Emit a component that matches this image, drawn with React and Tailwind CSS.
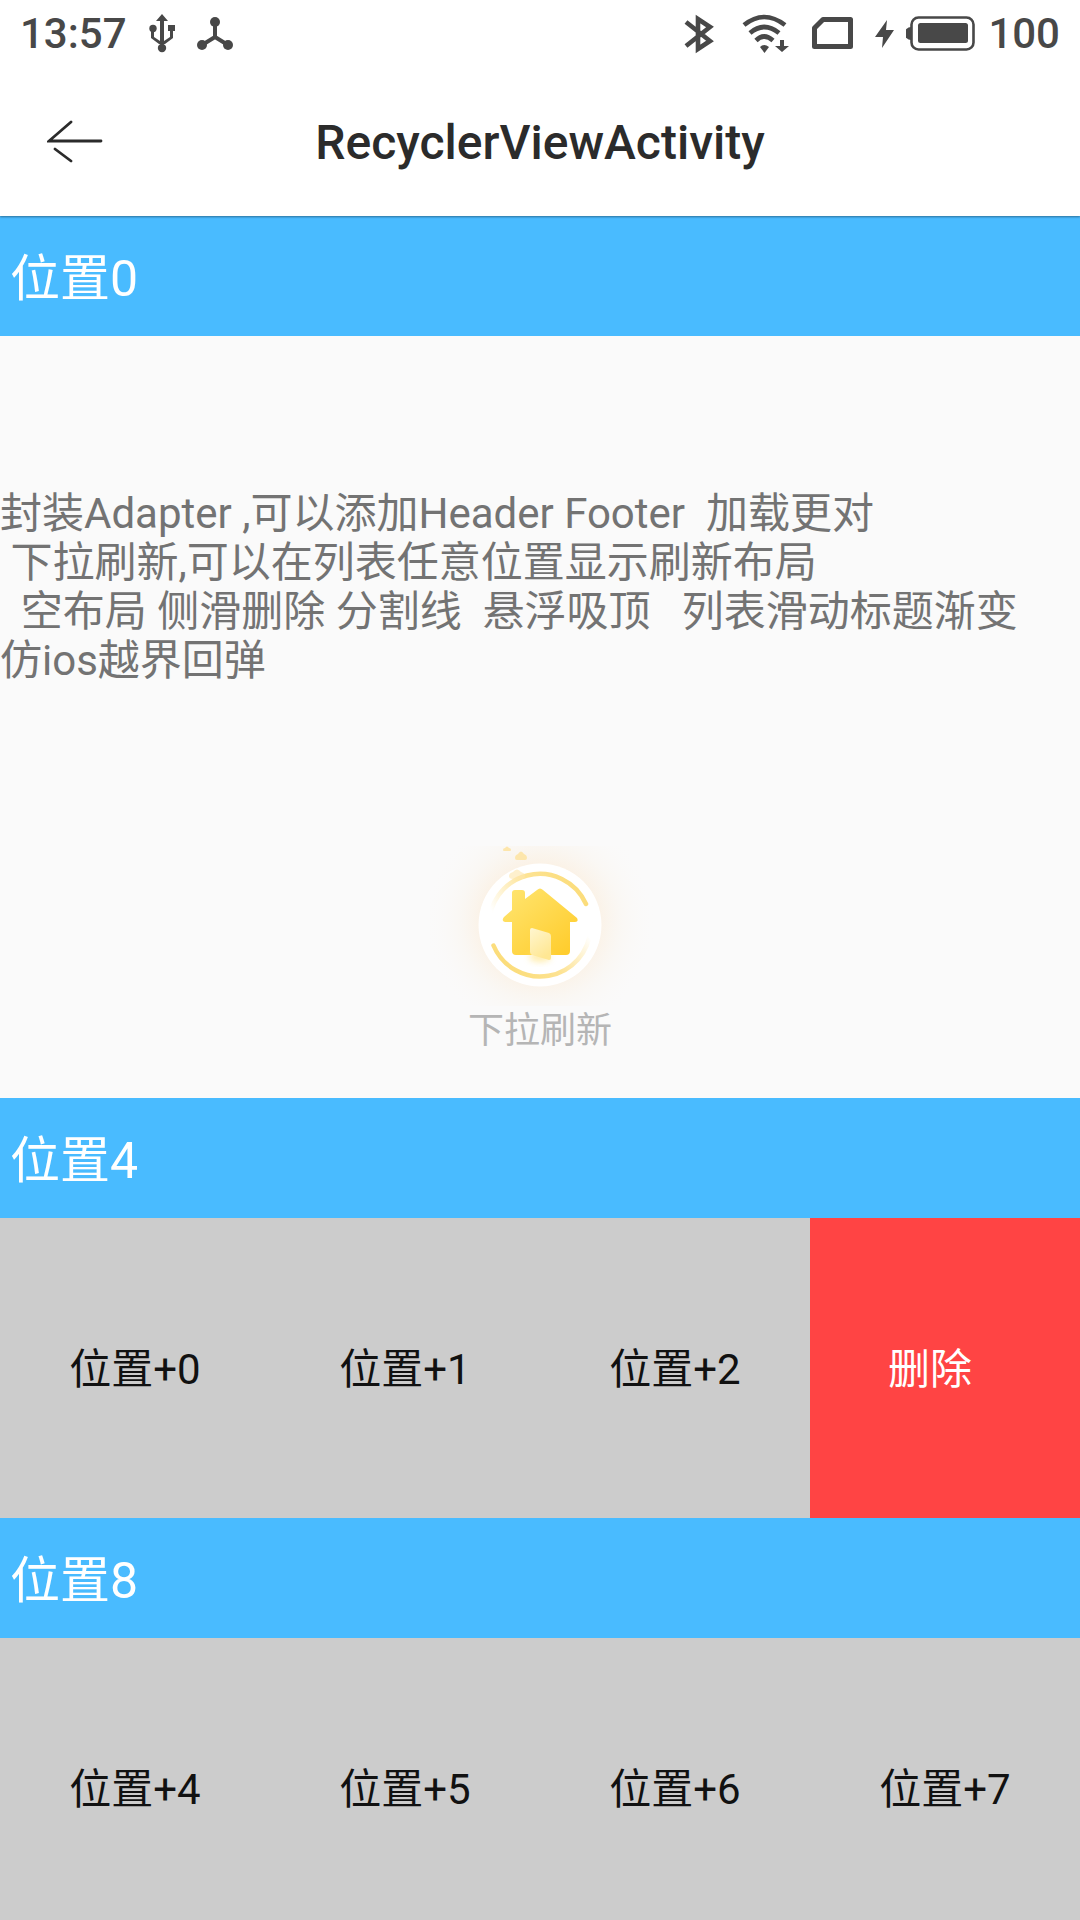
import React from "react";

const INK = "#484848";

function UsbIcon() {
  return (
    <svg width="26" height="40" viewBox="0 0 26 40" fill={INK} aria-hidden="true">
      <path d="M13 0l6 7h-4v20l6-4v-6h-2V11h7v6h-2v7l-8 6h-6l-8-6v-7h3v6l6 4V7H7z" />
      <circle cx="4" cy="14.500" r="3.700" />
      <circle cx="13" cy="34" r="4.200" />
    </svg>
  );
}

function TriNodeIcon() {
  return (
    <svg width="36" height="34" viewBox="0 0 36 34" fill={INK} aria-hidden="true">
      <path d="M18 5v15M18 20L5 28M18 20l13 8" stroke={INK} strokeWidth="4" fill="none" />
      <circle cx="18" cy="5" r="5" />
      <circle cx="5" cy="28" r="5" />
      <circle cx="31" cy="28" r="5" />
    </svg>
  );
}

function BluetoothIcon() {
  return (
    <svg width="30" height="40" viewBox="0 0 30 40" fill="none" stroke={INK} strokeWidth="4.600" aria-hidden="true">
      <path d="M2 8l24 19-12 8V5l12 8L2 32" />
    </svg>
  );
}

function WifiIcon() {
  return (
    <svg width="48" height="40" viewBox="0 0 48 40" fill="none" stroke={INK} strokeWidth="4.600" aria-hidden="true">
      <path d="M2 11Q22-5 43 11M8 19Q22 7 37 19M14 26.500Q22 18.500 31 26.500" />
      <path d="M18 33Q22 29 27 33L22.500 39z" fill={INK} stroke="none" />
      <path d="M38 26h4v6h5l-7 6-7-6h5z" fill={INK} stroke="none" />
    </svg>
  );
}

function SimIcon() {
  return (
    <svg width="41" height="33" viewBox="0 0 41 33" fill="none" stroke={INK} strokeWidth="5" aria-hidden="true">
      <path d="M11 2.500H38.500V29.500H2.500V11z" strokeLinejoin="round" />
    </svg>
  );
}

function BoltIcon() {
  return (
    <svg width="19" height="28" viewBox="0 0 19 28" fill={INK} aria-hidden="true">
      <path d="M12 0L0 17l8 0-1 11L19 10h-8z" />
    </svg>
  );
}

function BatteryIcon() {
  return (
    <svg width="70" height="35" viewBox="0 0 70 35" aria-hidden="true">
      <path d="M5 11a6.500 6.500 0 0 0 0 13z" fill={INK} />
      <rect x="5.500" y="1.500" width="62" height="32" rx="7" fill="none" stroke={INK} strokeWidth="2.600" />
      <rect x="12" y="7" width="50" height="20" rx="2.500" fill={INK} />
    </svg>
  );
}

function BackIcon() {
  return (
    <svg width="56" height="44" viewBox="0 0 56 44" fill="none" stroke="#2b2b2b" strokeWidth="2.800" strokeLinecap="round" aria-hidden="true">
      <path d="M24 2L2 21H54M8 29l16 12" />
    </svg>
  );
}

function HomeBadge() {
  return (
    <svg width="240" height="160" viewBox="0 0 240 160" aria-hidden="true">
      <defs>
        <radialGradient id="glow" gradientUnits="userSpaceOnUse" cx="120" cy="76" r="116">
          <stop offset="0.500" stopColor="#fbf1e4" stopOpacity="0.900" />
          <stop offset="0.700" stopColor="#faf6f0" stopOpacity="0.600" />
          <stop offset="1" stopColor="#fafafa" stopOpacity="0" />
        </radialGradient>
        <linearGradient id="house" x1="0" y1="0" x2="1" y2="1">
          <stop offset="0.100" stopColor="#ffe36b" />
          <stop offset="0.900" stopColor="#ffcd2e" />
        </linearGradient>
        <linearGradient id="door" x1="0" y1="0" x2="0.500" y2="1">
          <stop offset="0" stopColor="#fff6d0" />
          <stop offset="1" stopColor="#ffe793" />
        </linearGradient>
        <linearGradient id="arcTop" x1="0" y1="0.600" x2="1" y2="0.300">
          <stop offset="0" stopColor="#fde08a" stopOpacity="0" />
          <stop offset="0.500" stopColor="#fde394" />
          <stop offset="1" stopColor="#fbdc78" />
        </linearGradient>
        <linearGradient id="arcBottom" x1="1" y1="0.200" x2="0" y2="0.600">
          <stop offset="0" stopColor="#fde08a" stopOpacity="0" />
          <stop offset="0.500" stopColor="#fde394" />
          <stop offset="1" stopColor="#fbdc78" />
        </linearGradient>
        <filter id="soft" x="-50%" y="-50%" width="200%" height="200%">
          <feGaussianBlur stdDeviation="3" />
        </filter>
      </defs>
      <rect width="240" height="160" fill="url(#glow)" />
      <circle cx="120" cy="79" r="61.500" fill="#ffffff" />
      <path d="M69.500 83A50.500 50.500 0 0 1 166 58" fill="none" stroke="url(#arcTop)" strokeWidth="4.500" strokeLinecap="round" />
      <path d="M73.500 99.500A50.500 50.500 0 0 0 170.500 83" fill="none" stroke="url(#arcBottom)" strokeWidth="4.500" strokeLinecap="round" />
      <g fill="#fde6ac">
        <path d="M83 4q0-2 2-2 2-3 4 0 2 0 2 2 0 1-1 1h-6q-1 0-1-1z" />
        <path d="M95 12q0-3 3-4 3-5 6 0 3 1 3 4 0 2-2 2h-8q-2 0-2-2z" />
        <path d="M89 30q0-3 4-4 4-5 8 0 4 1 4 4 0 3-4 3h-8q-4 0-4-3z" opacity="0.600" />
      </g>
      <path
        d="M92 47q0-3 3-3h7q3 0 3 3v6l12-9q3-3 6 0l34 28q2 4-2 4h-5v29q0 4-4 4H96q-4 0-4-4V76h-7q-4-1-1-5l8-7z"
        fill="url(#house)"
      />
      <ellipse cx="120" cy="111" rx="11" ry="5" fill="#ffe58a" opacity="0.700" filter="url(#soft)" />
      <path d="M110 84q0-2 2-2l17 5q2 1 2 3v22q0 2-2 2l-17-5q-2-1-2-3z" fill="url(#door)" />
    </svg>
  );
}

function SectionHeader({ children }) {
  return (
    <h2 className="flex h-[120px] shrink-0 items-center bg-[#49bbff] px-[10px] pt-[6px] text-[50px] leading-[60px] text-white">
      {children}
    </h2>
  );
}

function Cell({ children }) {
  return <li className="flex items-center justify-center">{children}</li>;
}

const description = [
  "封装Adapter ,可以添加Header Footer  加载更对",
  " 下拉刷新,可以在列表任意位置显示刷新布局",
  "  空布局 侧滑删除 分割线  悬浮吸顶   列表滑动标题渐变",
  "仿ios越界回弹",
].join("\n");

export default function App() {
  return (
    <div
      lang="zh-CN"
      className="flex h-screen flex-col overflow-hidden bg-[#fafafa] font-[Roboto,'Noto_Sans_CJK_SC',sans-serif] text-[42px] leading-[49px] text-[#111111]"
    >
      <div className="relative z-10 shrink-0 bg-white shadow-[0_1px_2px_rgba(0,0,0,0.4)]">
        <div className="flex h-[67px] items-center justify-between px-5 font-medium text-[#484848]">
          <div className="flex items-center gap-[22px]">
            <span>13:57</span>
            <UsbIcon />
            <TriNodeIcon />
          </div>
          <div className="flex items-center gap-3">
            <div className="flex items-center gap-[22px]">
              <div className="flex items-center gap-7">
                <BluetoothIcon />
                <WifiIcon />
              </div>
              <SimIcon />
              <div className="flex items-center gap-3">
                <BoltIcon />
                <BatteryIcon />
              </div>
            </div>
            <span>100</span>
          </div>
        </div>

        <header className="grid h-[149px] grid-cols-[1fr_auto_1fr] items-center px-[47px]">
          <button type="button" aria-label="返回" className="justify-self-start">
            <BackIcon />
          </button>
          <h1 className="pt-[2px] text-[48px] leading-[56px] font-medium text-[#2b2b2b]">RecyclerViewActivity</h1>
        </header>
      </div>

      <main className="flex min-h-0 flex-1 flex-col">
        <SectionHeader>位置0</SectionHeader>
        <p className="flex h-[500px] shrink-0 items-center pt-[2px] whitespace-pre-wrap text-[#737373]">
          {description}
        </p>
        <div className="flex h-[262px] shrink-0 flex-col items-center gap-1 pt-[10px] text-[36px] leading-[42px] text-[#b5b5b5]">
          <HomeBadge />
          <span>下拉刷新</span>
        </div>

        <SectionHeader>位置4</SectionHeader>
        <div className="grid h-[300px] shrink-0 grid-cols-4 bg-[#cccccc]">
          <ul className="col-span-3 grid grid-cols-3 pt-[2px]">
            <Cell>位置+0</Cell>
            <Cell>位置+1</Cell>
            <Cell>位置+2</Cell>
          </ul>
          <button type="button" className="bg-[#ff4444] pt-[2px] pr-[30px] text-white">
            删除
          </button>
        </div>

        <SectionHeader>位置8</SectionHeader>
        <ul className="grid h-[300px] shrink-0 grid-cols-4 bg-[#cccccc] pt-[2px]">
          <Cell>位置+4</Cell>
          <Cell>位置+5</Cell>
          <Cell>位置+6</Cell>
          <Cell>位置+7</Cell>
        </ul>
      </main>
    </div>
  );
}
